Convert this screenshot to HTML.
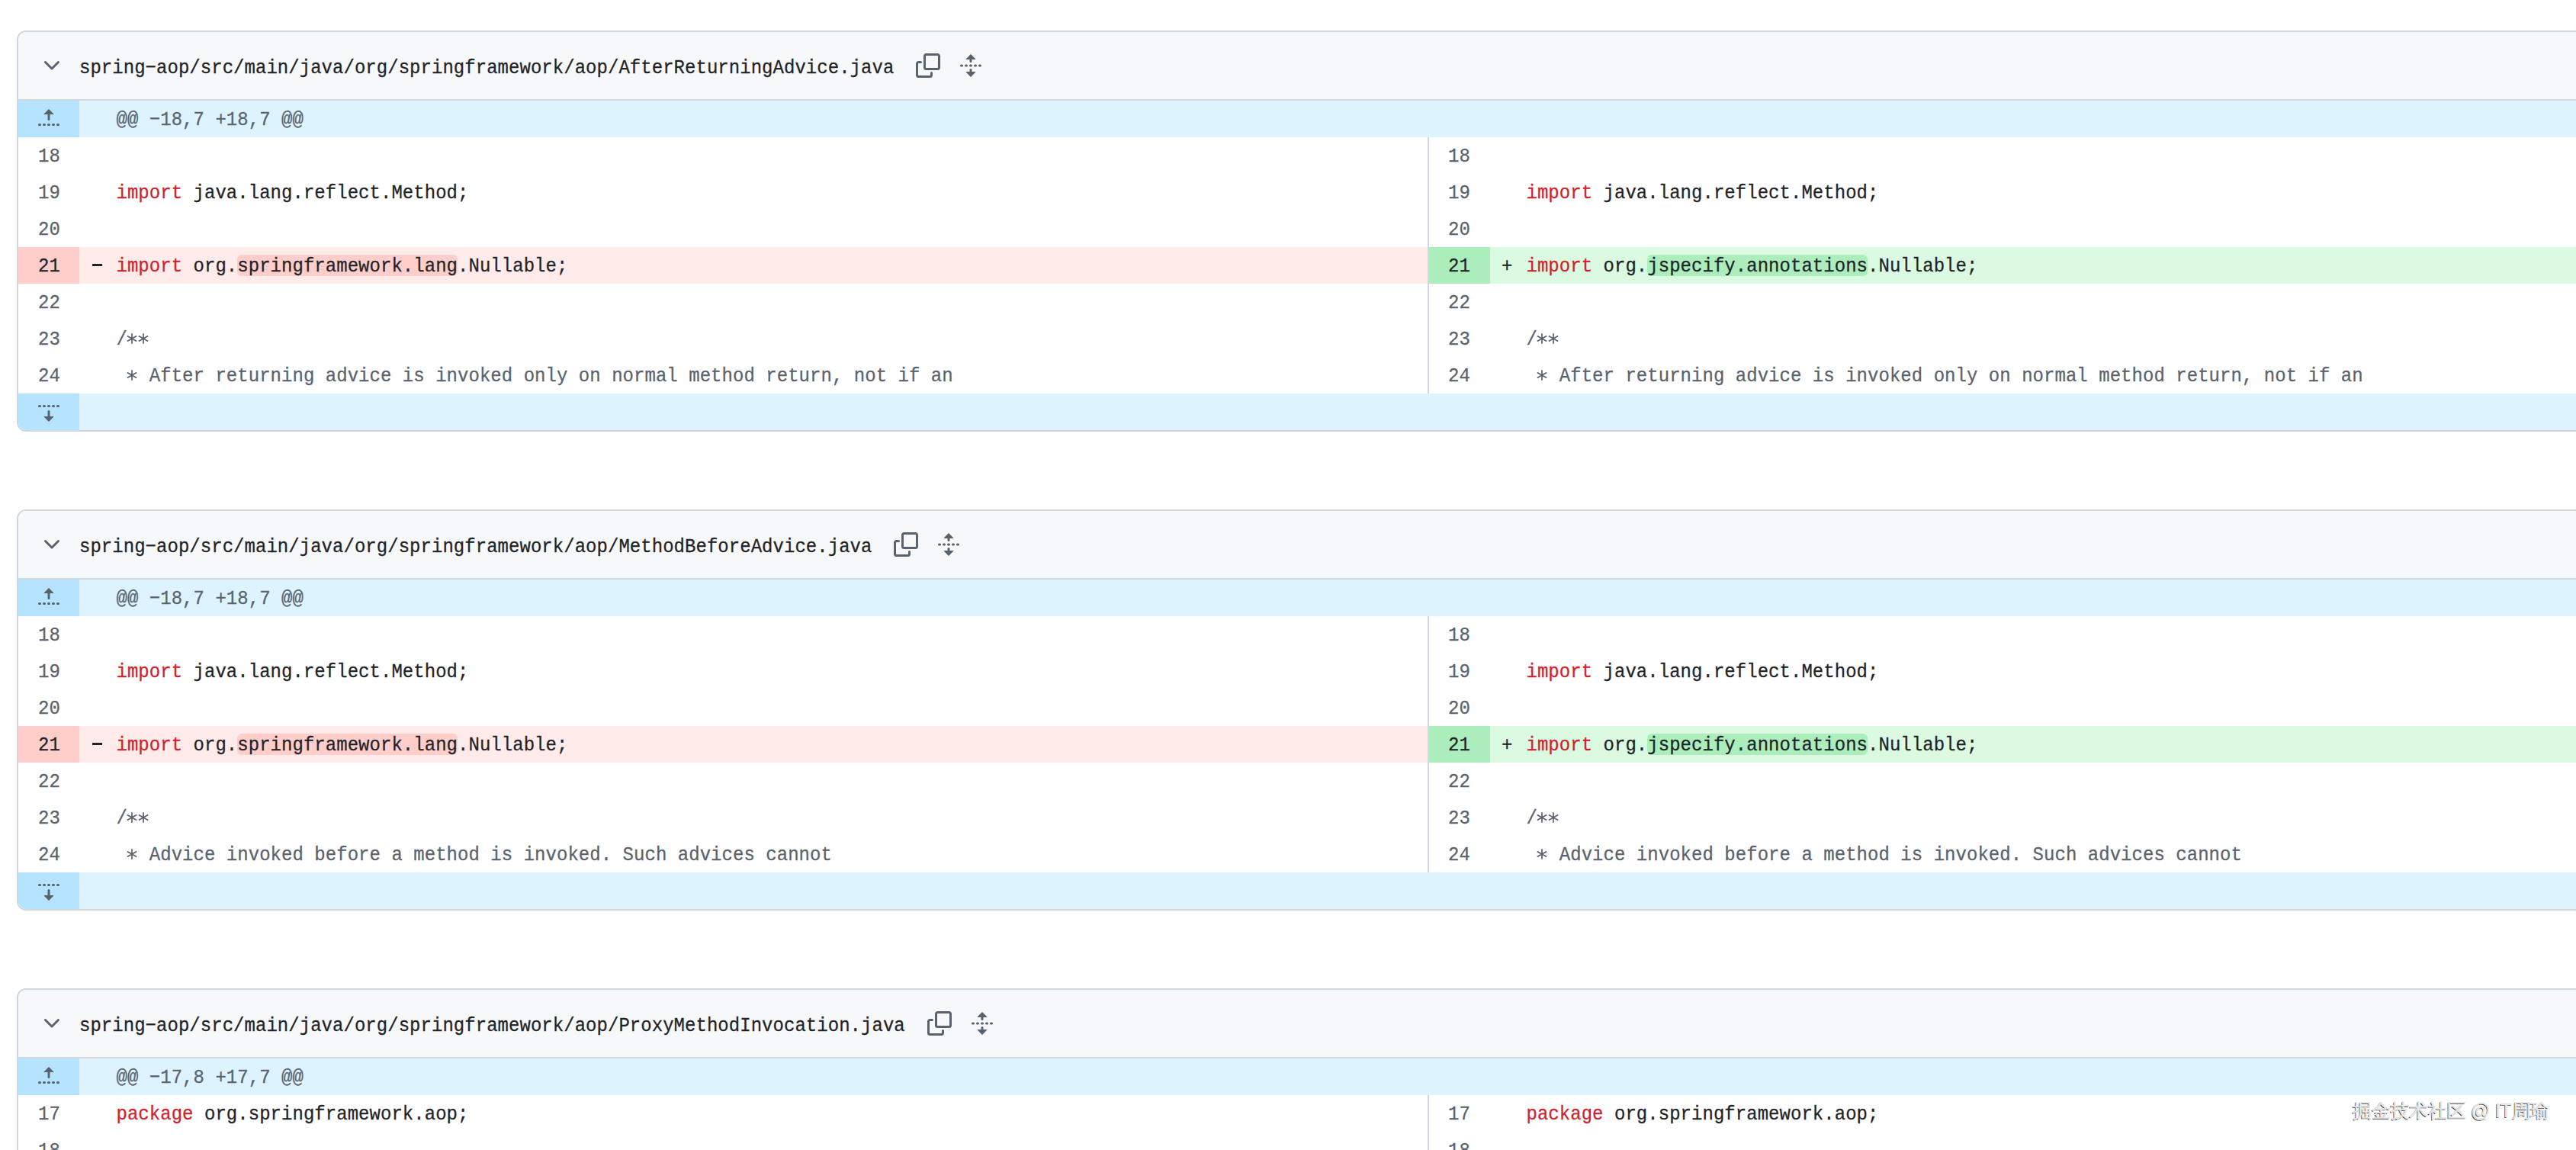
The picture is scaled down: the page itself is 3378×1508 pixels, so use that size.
<!DOCTYPE html>
<html><head><meta charset="utf-8"><style>
*{margin:0;padding:0;box-sizing:border-box}
html,body{width:3378px;height:1508px;overflow:hidden;background:#ffffff}
body{position:relative;font-family:"Liberation Mono",monospace;font-size:24px;color:#1f2328}
.box{position:absolute;left:22px;width:3420px;border:2px solid #d0d7de;border-radius:12px;background:#fff;overflow:hidden}
.hdr{position:absolute;left:0;top:0;width:100%;height:90px;background:#f6f8fa;border-bottom:2px solid #d0d7de}
.ic{position:absolute;width:32px;height:32px}
.ic svg{display:block}
.fn{position:absolute;left:80px;top:4px;height:88px;line-height:88px;white-space:pre;color:#1f2328;letter-spacing:0.035px;transform:scaleY(1.07);transform-origin:0 50px;-webkit-text-stroke:0.25px currentColor}
.row{position:absolute;left:0;width:100%;height:48px}
.c{position:absolute;top:2px;height:48px;line-height:48px;white-space:pre;letter-spacing:0.035px;transform:scaleY(1.07);transform-origin:0 30px;-webkit-text-stroke:0.25px currentColor}
.t{position:absolute;top:0;height:48px}
.hk{background:#ddf4ff}
.hkg{background:#b6e3ff}
.del{background:#ffebe9}
.delg{background:#ffcecb}
.add{background:#dafbe1}
.addg{background:#aceebb}
.mk{position:absolute;width:13.7px;height:2.6px;background:#1f2328}
.sep{position:absolute;top:0;width:2px;background:#d0d7de}
.ln{color:#59636e}
.lnd{color:#1f2328}
.kw{color:#cf222e}
.cm{color:#59636e}
.ast{position:absolute;top:16.3px;width:16px;height:16px}
.ast svg{display:block}
.hl{position:absolute;top:10px;height:27.5px;border-radius:6px}
.hld{background:#ffcecb}
.hla{background:#aceebb}
.wm{position:absolute;left:3085px;top:1439px;font-family:"Liberation Sans",sans-serif;font-size:25px;line-height:34px;color:#e6e6e6;text-shadow:-1px 1px 0 #3a3a3a;white-space:pre;font-weight:500;-webkit-text-stroke:0.5px #e6e6e6;letter-spacing:-0.25px}
</style></head><body>
<div class="box" style="top:40px;height:526px">
<div class="hdr">
<div class="ic" style="left:28px;top:28px"><svg width="32" height="32" viewBox="0 0 16 16"><path fill="#59636e" d="M12.78 5.22a.749.749 0 0 1 0 1.06l-4.25 4.25a.749.749 0 0 1-1.06 0L3.22 6.28a.749.749 0 0 1 .326-1.275.749.749 0 0 1 .734.215L8 8.939l3.72-3.719a.749.749 0 0 1 1.06 0Z"/></svg></div>
<div class="fn">spring−aop/src/main/java/org/springframework/aop/AfterReturningAdvice.java</div>
<div class="ic" style="left:1177.2px;top:28px"><svg width="32" height="32" viewBox="0 0 16 16"><path fill="#59636e" d="M0 6.75C0 5.784.784 5 1.75 5h1.5a.75.75 0 0 1 0 1.5h-1.5a.25.25 0 0 0-.25.25v7.5c0 .138.112.25.25.25h7.5a.25.25 0 0 0 .25-.25v-1.5a.75.75 0 0 1 1.5 0v1.5A1.75 1.75 0 0 1 9.25 16h-7.5A1.75 1.75 0 0 1 0 14.25Z"/><path fill="#59636e" d="M5 1.75C5 .784 5.784 0 6.75 0h7.5C15.216 0 16 .784 16 1.75v7.5A1.75 1.75 0 0 1 14.25 11h-7.5A1.75 1.75 0 0 1 5 9.25Zm1.75-.25a.25.25 0 0 0-.25.25v7.5c0 .138.112.25.25.25h7.5a.25.25 0 0 0 .25-.25v-7.5a.25.25 0 0 0-.25-.25Z"/></svg></div>
<div class="ic" style="left:1233.2px;top:28px"><svg width="32" height="32" viewBox="0 0 16 16"><path fill="#59636e" d="m8.177.677 2.896 2.896a.25.25 0 0 1-.177.427H8.75v1.25a.75.75 0 0 1-1.5 0V4H5.104a.25.25 0 0 1-.177-.427L7.823.677a.25.25 0 0 1 .354 0ZM7.25 10.75a.75.75 0 0 1 1.5 0V12h2.146a.25.25 0 0 1 .177.427l-2.896 2.896a.25.25 0 0 1-.354 0l-2.896-2.896A.25.25 0 0 1 5.104 12H7.25v-1.25Zm-5-2a.75.75 0 0 0 0-1.5h-.5a.75.75 0 0 0 0 1.5h.5ZM6 8a.75.75 0 0 1-.75.75h-.5a.75.75 0 0 1 0-1.5h.5A.75.75 0 0 1 6 8Zm2.25.75a.75.75 0 0 0 0-1.5h-.5a.75.75 0 0 0 0 1.5h.5ZM12 8a.75.75 0 0 1-.75.75h-.5a.75.75 0 0 1 0-1.5h.5A.75.75 0 0 1 12 8Zm2.25.75a.75.75 0 0 0 0-1.5h-.5a.75.75 0 0 0 0 1.5h.5Z"/></svg></div>
</div>
<div class="row hk" style="top:90px">
<div class="t hkg" style="left:0;width:79.5px"></div>
<div class="ic" style="left:24px;top:8px"><svg width="32" height="32" viewBox="0 0 16 16"><path fill="#59636e" d="M7.823 1.677 4.927 4.573A.25.25 0 0 0 5.104 5H7.25v3.236a.75.75 0 1 0 1.5 0V5h2.146a.25.25 0 0 0 .177-.427L8.177 1.677a.25.25 0 0 0-.354 0ZM13.75 11a.75.75 0 0 0 0 1.5h.5a.75.75 0 0 0 0-1.5h-.5Zm-3.75.75a.75.75 0 0 1 .75-.75h.5a.75.75 0 0 1 0 1.5h-.5a.75.75 0 0 1-.75-.75ZM7.75 11a.75.75 0 0 0 0 1.5h.5a.75.75 0 0 0 0-1.5h-.5ZM4 11.75a.75.75 0 0 1 .75-.75h.5a.75.75 0 0 1 0 1.5h-.5a.75.75 0 0 1-.75-.75ZM1.75 11a.75.75 0 0 0 0 1.5h.5a.75.75 0 0 0 0-1.5h-.5Z"/></svg></div>
<div class="c ln" style="left:128.5px">@@ −18,7 +18,7 @@</div>
</div>
<div class="row" style="top:138px">
<div class="c ln" style="left:26.0px">18</div>
<div class="c" style="left:128.5px"></div>

<div class="c ln" style="left:1875.0px">18</div>
<div class="c" style="left:1977.5px"></div>

</div>
<div class="row" style="top:186px">
<div class="c ln" style="left:26.0px">19</div>
<div class="c" style="left:128.5px"><span class="kw">import</span> java.lang.reflect.Method;</div>

<div class="c ln" style="left:1875.0px">19</div>
<div class="c" style="left:1977.5px"><span class="kw">import</span> java.lang.reflect.Method;</div>

</div>
<div class="row" style="top:234px">
<div class="c ln" style="left:26.0px">20</div>
<div class="c" style="left:128.5px"></div>

<div class="c ln" style="left:1875.0px">20</div>
<div class="c" style="left:1977.5px"></div>

</div>
<div class="row" style="top:282px">
<div class="t delg" style="left:0;width:79.5px"></div>
<div class="t del" style="left:79.5px;width:1768.5px"></div>
<div class="t addg" style="left:1850px;width:79.5px"></div>
<div class="t add" style="left:1929.5px;width:2000px"></div>
<div class="hl hld" style="left:287.28px;width:288.70px"></div>
<div class="hl hla" style="left:2136.28px;width:288.70px"></div>
<div class="c lnd" style="left:26px">21</div>
<div class="mk" style="left:96.5px;top:22px"></div>
<div class="c" style="left:128.5px"><span class="kw">import</span> org.springframework.lang.Nullable;</div>
<div class="c lnd" style="left:1875.0px">21</div>
<div class="c" style="left:1945px">+</div>
<div class="c" style="left:1977.5px"><span class="kw">import</span> org.jspecify.annotations.Nullable;</div>
</div>
<div class="row" style="top:330px">
<div class="c ln" style="left:26.0px">22</div>
<div class="c" style="left:128.5px"></div>

<div class="c ln" style="left:1875.0px">22</div>
<div class="c" style="left:1977.5px"></div>

</div>
<div class="row" style="top:378px">
<div class="c ln" style="left:26.0px">23</div>
<div class="c" style="left:128.5px"><span class="cm">/  </span></div>
<div class="ast" style="left:141.45px"><svg width="16" height="16" viewBox="-8 -8 16 16"><path d="M0 -6.87V6.87M-6.2 -3.58L6.2 3.58M-6.2 3.58L6.2 -3.58" stroke="#59636e" stroke-width="1.7" fill="none"/></svg></div><div class="ast" style="left:155.89px"><svg width="16" height="16" viewBox="-8 -8 16 16"><path d="M0 -6.87V6.87M-6.2 -3.58L6.2 3.58M-6.2 3.58L6.2 -3.58" stroke="#59636e" stroke-width="1.7" fill="none"/></svg></div>
<div class="c ln" style="left:1875.0px">23</div>
<div class="c" style="left:1977.5px"><span class="cm">/  </span></div>
<div class="ast" style="left:1990.45px"><svg width="16" height="16" viewBox="-8 -8 16 16"><path d="M0 -6.87V6.87M-6.2 -3.58L6.2 3.58M-6.2 3.58L6.2 -3.58" stroke="#59636e" stroke-width="1.7" fill="none"/></svg></div><div class="ast" style="left:2004.89px"><svg width="16" height="16" viewBox="-8 -8 16 16"><path d="M0 -6.87V6.87M-6.2 -3.58L6.2 3.58M-6.2 3.58L6.2 -3.58" stroke="#59636e" stroke-width="1.7" fill="none"/></svg></div>
</div>
<div class="row" style="top:426px">
<div class="c ln" style="left:26.0px">24</div>
<div class="c" style="left:128.5px"><span class="cm">   After returning advice is invoked only on normal method return, not if an</span></div>
<div class="ast" style="left:141.45px"><svg width="16" height="16" viewBox="-8 -8 16 16"><path d="M0 -6.87V6.87M-6.2 -3.58L6.2 3.58M-6.2 3.58L6.2 -3.58" stroke="#59636e" stroke-width="1.7" fill="none"/></svg></div>
<div class="c ln" style="left:1875.0px">24</div>
<div class="c" style="left:1977.5px"><span class="cm">   After returning advice is invoked only on normal method return, not if an</span></div>
<div class="ast" style="left:1990.45px"><svg width="16" height="16" viewBox="-8 -8 16 16"><path d="M0 -6.87V6.87M-6.2 -3.58L6.2 3.58M-6.2 3.58L6.2 -3.58" stroke="#59636e" stroke-width="1.7" fill="none"/></svg></div>
</div>
<div class="sep" style="left:1848px;top:138px;height:336px"></div>
<div class="row hk" style="top:474px">
<div class="t hkg" style="left:0;width:79.5px"></div>
<div class="ic" style="left:24px;top:8px"><svg width="32" height="32" viewBox="0 0 16 16"><path fill="#59636e" d="m8.177 14.323 2.896-2.896a.25.25 0 0 0-.177-.427H8.75V7.764a.75.75 0 1 0-1.5 0V11H5.104a.25.25 0 0 0-.177.427l2.896 2.896a.25.25 0 0 0 .354 0ZM2.25 5a.75.75 0 0 0 0-1.5h-.5a.75.75 0 0 0 0 1.5h.5ZM6 4.25a.75.75 0 0 1-.75.75h-.5a.75.75 0 0 1 0-1.5h.5a.75.75 0 0 1 .75.75ZM8.25 5a.75.75 0 0 0 0-1.5h-.5a.75.75 0 0 0 0 1.5h.5ZM12 4.25a.75.75 0 0 1-.75.75h-.5a.75.75 0 0 1 0-1.5h.5a.75.75 0 0 1 .75.75Zm2.25.75a.75.75 0 0 0 0-1.5h-.5a.75.75 0 0 0 0 1.5h.5Z"/></svg></div>
</div>
</div>
<div class="box" style="top:668px;height:526px">
<div class="hdr">
<div class="ic" style="left:28px;top:28px"><svg width="32" height="32" viewBox="0 0 16 16"><path fill="#59636e" d="M12.78 5.22a.749.749 0 0 1 0 1.06l-4.25 4.25a.749.749 0 0 1-1.06 0L3.22 6.28a.749.749 0 0 1 .326-1.275.749.749 0 0 1 .734.215L8 8.939l3.72-3.719a.749.749 0 0 1 1.06 0Z"/></svg></div>
<div class="fn">spring−aop/src/main/java/org/springframework/aop/MethodBeforeAdvice.java</div>
<div class="ic" style="left:1148.3px;top:28px"><svg width="32" height="32" viewBox="0 0 16 16"><path fill="#59636e" d="M0 6.75C0 5.784.784 5 1.75 5h1.5a.75.75 0 0 1 0 1.5h-1.5a.25.25 0 0 0-.25.25v7.5c0 .138.112.25.25.25h7.5a.25.25 0 0 0 .25-.25v-1.5a.75.75 0 0 1 1.5 0v1.5A1.75 1.75 0 0 1 9.25 16h-7.5A1.75 1.75 0 0 1 0 14.25Z"/><path fill="#59636e" d="M5 1.75C5 .784 5.784 0 6.75 0h7.5C15.216 0 16 .784 16 1.75v7.5A1.75 1.75 0 0 1 14.25 11h-7.5A1.75 1.75 0 0 1 5 9.25Zm1.75-.25a.25.25 0 0 0-.25.25v7.5c0 .138.112.25.25.25h7.5a.25.25 0 0 0 .25-.25v-7.5a.25.25 0 0 0-.25-.25Z"/></svg></div>
<div class="ic" style="left:1204.3px;top:28px"><svg width="32" height="32" viewBox="0 0 16 16"><path fill="#59636e" d="m8.177.677 2.896 2.896a.25.25 0 0 1-.177.427H8.75v1.25a.75.75 0 0 1-1.5 0V4H5.104a.25.25 0 0 1-.177-.427L7.823.677a.25.25 0 0 1 .354 0ZM7.25 10.75a.75.75 0 0 1 1.5 0V12h2.146a.25.25 0 0 1 .177.427l-2.896 2.896a.25.25 0 0 1-.354 0l-2.896-2.896A.25.25 0 0 1 5.104 12H7.25v-1.25Zm-5-2a.75.75 0 0 0 0-1.5h-.5a.75.75 0 0 0 0 1.5h.5ZM6 8a.75.75 0 0 1-.75.75h-.5a.75.75 0 0 1 0-1.5h.5A.75.75 0 0 1 6 8Zm2.25.75a.75.75 0 0 0 0-1.5h-.5a.75.75 0 0 0 0 1.5h.5ZM12 8a.75.75 0 0 1-.75.75h-.5a.75.75 0 0 1 0-1.5h.5A.75.75 0 0 1 12 8Zm2.25.75a.75.75 0 0 0 0-1.5h-.5a.75.75 0 0 0 0 1.5h.5Z"/></svg></div>
</div>
<div class="row hk" style="top:90px">
<div class="t hkg" style="left:0;width:79.5px"></div>
<div class="ic" style="left:24px;top:8px"><svg width="32" height="32" viewBox="0 0 16 16"><path fill="#59636e" d="M7.823 1.677 4.927 4.573A.25.25 0 0 0 5.104 5H7.25v3.236a.75.75 0 1 0 1.5 0V5h2.146a.25.25 0 0 0 .177-.427L8.177 1.677a.25.25 0 0 0-.354 0ZM13.75 11a.75.75 0 0 0 0 1.5h.5a.75.75 0 0 0 0-1.5h-.5Zm-3.75.75a.75.75 0 0 1 .75-.75h.5a.75.75 0 0 1 0 1.5h-.5a.75.75 0 0 1-.75-.75ZM7.75 11a.75.75 0 0 0 0 1.5h.5a.75.75 0 0 0 0-1.5h-.5ZM4 11.75a.75.75 0 0 1 .75-.75h.5a.75.75 0 0 1 0 1.5h-.5a.75.75 0 0 1-.75-.75ZM1.75 11a.75.75 0 0 0 0 1.5h.5a.75.75 0 0 0 0-1.5h-.5Z"/></svg></div>
<div class="c ln" style="left:128.5px">@@ −18,7 +18,7 @@</div>
</div>
<div class="row" style="top:138px">
<div class="c ln" style="left:26.0px">18</div>
<div class="c" style="left:128.5px"></div>

<div class="c ln" style="left:1875.0px">18</div>
<div class="c" style="left:1977.5px"></div>

</div>
<div class="row" style="top:186px">
<div class="c ln" style="left:26.0px">19</div>
<div class="c" style="left:128.5px"><span class="kw">import</span> java.lang.reflect.Method;</div>

<div class="c ln" style="left:1875.0px">19</div>
<div class="c" style="left:1977.5px"><span class="kw">import</span> java.lang.reflect.Method;</div>

</div>
<div class="row" style="top:234px">
<div class="c ln" style="left:26.0px">20</div>
<div class="c" style="left:128.5px"></div>

<div class="c ln" style="left:1875.0px">20</div>
<div class="c" style="left:1977.5px"></div>

</div>
<div class="row" style="top:282px">
<div class="t delg" style="left:0;width:79.5px"></div>
<div class="t del" style="left:79.5px;width:1768.5px"></div>
<div class="t addg" style="left:1850px;width:79.5px"></div>
<div class="t add" style="left:1929.5px;width:2000px"></div>
<div class="hl hld" style="left:287.28px;width:288.70px"></div>
<div class="hl hla" style="left:2136.28px;width:288.70px"></div>
<div class="c lnd" style="left:26px">21</div>
<div class="mk" style="left:96.5px;top:22px"></div>
<div class="c" style="left:128.5px"><span class="kw">import</span> org.springframework.lang.Nullable;</div>
<div class="c lnd" style="left:1875.0px">21</div>
<div class="c" style="left:1945px">+</div>
<div class="c" style="left:1977.5px"><span class="kw">import</span> org.jspecify.annotations.Nullable;</div>
</div>
<div class="row" style="top:330px">
<div class="c ln" style="left:26.0px">22</div>
<div class="c" style="left:128.5px"></div>

<div class="c ln" style="left:1875.0px">22</div>
<div class="c" style="left:1977.5px"></div>

</div>
<div class="row" style="top:378px">
<div class="c ln" style="left:26.0px">23</div>
<div class="c" style="left:128.5px"><span class="cm">/  </span></div>
<div class="ast" style="left:141.45px"><svg width="16" height="16" viewBox="-8 -8 16 16"><path d="M0 -6.87V6.87M-6.2 -3.58L6.2 3.58M-6.2 3.58L6.2 -3.58" stroke="#59636e" stroke-width="1.7" fill="none"/></svg></div><div class="ast" style="left:155.89px"><svg width="16" height="16" viewBox="-8 -8 16 16"><path d="M0 -6.87V6.87M-6.2 -3.58L6.2 3.58M-6.2 3.58L6.2 -3.58" stroke="#59636e" stroke-width="1.7" fill="none"/></svg></div>
<div class="c ln" style="left:1875.0px">23</div>
<div class="c" style="left:1977.5px"><span class="cm">/  </span></div>
<div class="ast" style="left:1990.45px"><svg width="16" height="16" viewBox="-8 -8 16 16"><path d="M0 -6.87V6.87M-6.2 -3.58L6.2 3.58M-6.2 3.58L6.2 -3.58" stroke="#59636e" stroke-width="1.7" fill="none"/></svg></div><div class="ast" style="left:2004.89px"><svg width="16" height="16" viewBox="-8 -8 16 16"><path d="M0 -6.87V6.87M-6.2 -3.58L6.2 3.58M-6.2 3.58L6.2 -3.58" stroke="#59636e" stroke-width="1.7" fill="none"/></svg></div>
</div>
<div class="row" style="top:426px">
<div class="c ln" style="left:26.0px">24</div>
<div class="c" style="left:128.5px"><span class="cm">   Advice invoked before a method is invoked. Such advices cannot</span></div>
<div class="ast" style="left:141.45px"><svg width="16" height="16" viewBox="-8 -8 16 16"><path d="M0 -6.87V6.87M-6.2 -3.58L6.2 3.58M-6.2 3.58L6.2 -3.58" stroke="#59636e" stroke-width="1.7" fill="none"/></svg></div>
<div class="c ln" style="left:1875.0px">24</div>
<div class="c" style="left:1977.5px"><span class="cm">   Advice invoked before a method is invoked. Such advices cannot</span></div>
<div class="ast" style="left:1990.45px"><svg width="16" height="16" viewBox="-8 -8 16 16"><path d="M0 -6.87V6.87M-6.2 -3.58L6.2 3.58M-6.2 3.58L6.2 -3.58" stroke="#59636e" stroke-width="1.7" fill="none"/></svg></div>
</div>
<div class="sep" style="left:1848px;top:138px;height:336px"></div>
<div class="row hk" style="top:474px">
<div class="t hkg" style="left:0;width:79.5px"></div>
<div class="ic" style="left:24px;top:8px"><svg width="32" height="32" viewBox="0 0 16 16"><path fill="#59636e" d="m8.177 14.323 2.896-2.896a.25.25 0 0 0-.177-.427H8.75V7.764a.75.75 0 1 0-1.5 0V11H5.104a.25.25 0 0 0-.177.427l2.896 2.896a.25.25 0 0 0 .354 0ZM2.25 5a.75.75 0 0 0 0-1.5h-.5a.75.75 0 0 0 0 1.5h.5ZM6 4.25a.75.75 0 0 1-.75.75h-.5a.75.75 0 0 1 0-1.5h.5a.75.75 0 0 1 .75.75ZM8.25 5a.75.75 0 0 0 0-1.5h-.5a.75.75 0 0 0 0 1.5h.5ZM12 4.25a.75.75 0 0 1-.75.75h-.5a.75.75 0 0 1 0-1.5h.5a.75.75 0 0 1 .75.75Zm2.25.75a.75.75 0 0 0 0-1.5h-.5a.75.75 0 0 0 0 1.5h.5Z"/></svg></div>
</div>
</div>
<div class="box" style="top:1296px;height:700px">
<div class="hdr">
<div class="ic" style="left:28px;top:28px"><svg width="32" height="32" viewBox="0 0 16 16"><path fill="#59636e" d="M12.78 5.22a.749.749 0 0 1 0 1.06l-4.25 4.25a.749.749 0 0 1-1.06 0L3.22 6.28a.749.749 0 0 1 .326-1.275.749.749 0 0 1 .734.215L8 8.939l3.72-3.719a.749.749 0 0 1 1.06 0Z"/></svg></div>
<div class="fn">spring−aop/src/main/java/org/springframework/aop/ProxyMethodInvocation.java</div>
<div class="ic" style="left:1191.6px;top:28px"><svg width="32" height="32" viewBox="0 0 16 16"><path fill="#59636e" d="M0 6.75C0 5.784.784 5 1.75 5h1.5a.75.75 0 0 1 0 1.5h-1.5a.25.25 0 0 0-.25.25v7.5c0 .138.112.25.25.25h7.5a.25.25 0 0 0 .25-.25v-1.5a.75.75 0 0 1 1.5 0v1.5A1.75 1.75 0 0 1 9.25 16h-7.5A1.75 1.75 0 0 1 0 14.25Z"/><path fill="#59636e" d="M5 1.75C5 .784 5.784 0 6.75 0h7.5C15.216 0 16 .784 16 1.75v7.5A1.75 1.75 0 0 1 14.25 11h-7.5A1.75 1.75 0 0 1 5 9.25Zm1.75-.25a.25.25 0 0 0-.25.25v7.5c0 .138.112.25.25.25h7.5a.25.25 0 0 0 .25-.25v-7.5a.25.25 0 0 0-.25-.25Z"/></svg></div>
<div class="ic" style="left:1247.6px;top:28px"><svg width="32" height="32" viewBox="0 0 16 16"><path fill="#59636e" d="m8.177.677 2.896 2.896a.25.25 0 0 1-.177.427H8.75v1.25a.75.75 0 0 1-1.5 0V4H5.104a.25.25 0 0 1-.177-.427L7.823.677a.25.25 0 0 1 .354 0ZM7.25 10.75a.75.75 0 0 1 1.5 0V12h2.146a.25.25 0 0 1 .177.427l-2.896 2.896a.25.25 0 0 1-.354 0l-2.896-2.896A.25.25 0 0 1 5.104 12H7.25v-1.25Zm-5-2a.75.75 0 0 0 0-1.5h-.5a.75.75 0 0 0 0 1.5h.5ZM6 8a.75.75 0 0 1-.75.75h-.5a.75.75 0 0 1 0-1.5h.5A.75.75 0 0 1 6 8Zm2.25.75a.75.75 0 0 0 0-1.5h-.5a.75.75 0 0 0 0 1.5h.5ZM12 8a.75.75 0 0 1-.75.75h-.5a.75.75 0 0 1 0-1.5h.5A.75.75 0 0 1 12 8Zm2.25.75a.75.75 0 0 0 0-1.5h-.5a.75.75 0 0 0 0 1.5h.5Z"/></svg></div>
</div>
<div class="row hk" style="top:90px">
<div class="t hkg" style="left:0;width:79.5px"></div>
<div class="ic" style="left:24px;top:8px"><svg width="32" height="32" viewBox="0 0 16 16"><path fill="#59636e" d="M7.823 1.677 4.927 4.573A.25.25 0 0 0 5.104 5H7.25v3.236a.75.75 0 1 0 1.5 0V5h2.146a.25.25 0 0 0 .177-.427L8.177 1.677a.25.25 0 0 0-.354 0ZM13.75 11a.75.75 0 0 0 0 1.5h.5a.75.75 0 0 0 0-1.5h-.5Zm-3.75.75a.75.75 0 0 1 .75-.75h.5a.75.75 0 0 1 0 1.5h-.5a.75.75 0 0 1-.75-.75ZM7.75 11a.75.75 0 0 0 0 1.5h.5a.75.75 0 0 0 0-1.5h-.5ZM4 11.75a.75.75 0 0 1 .75-.75h.5a.75.75 0 0 1 0 1.5h-.5a.75.75 0 0 1-.75-.75ZM1.75 11a.75.75 0 0 0 0 1.5h.5a.75.75 0 0 0 0-1.5h-.5Z"/></svg></div>
<div class="c ln" style="left:128.5px">@@ −17,8 +17,7 @@</div>
</div>
<div class="row" style="top:138px">
<div class="c ln" style="left:26.0px">17</div>
<div class="c" style="left:128.5px"><span class="kw">package</span> org.springframework.aop;</div>

<div class="c ln" style="left:1875.0px">17</div>
<div class="c" style="left:1977.5px"><span class="kw">package</span> org.springframework.aop;</div>

</div>
<div class="row" style="top:186px">
<div class="c ln" style="left:26.0px">18</div>
<div class="c" style="left:128.5px"></div>

<div class="c ln" style="left:1875.0px">18</div>
<div class="c" style="left:1977.5px"></div>

</div>
<div class="sep" style="left:1848px;top:138px;height:96px"></div>
</div>
<div class="wm">掘金技术社区 @ IT周瑜</div>
</body></html>
